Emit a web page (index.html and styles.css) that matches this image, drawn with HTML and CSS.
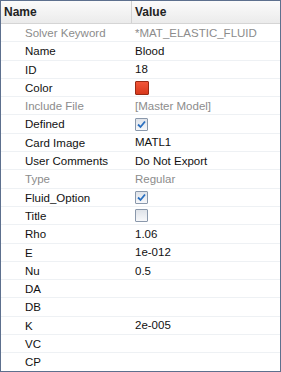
FILE: index.html
```html
<!DOCTYPE html>
<html lang="en">
<head>
    <meta charset="UTF-8">
    <title>Properties</title>
    <link rel="stylesheet" href="styles.css">
</head>
<body>
    <div class="grid-box">
        <div class="head">
            <div class="hcell name-col">Name</div>
            <div class="hcell value-col">Value</div>
        </div>
        <div class="row dim"><div class="name-col">Solver Keyword</div><div class="value-col">*MAT_ELASTIC_FLUID</div></div>
        <div class="row"><div class="name-col">Name</div><div class="value-col">Blood</div></div>
        <div class="row"><div class="name-col">ID</div><div class="value-col">18</div></div>
        <div class="row"><div class="name-col">Color</div><div class="value-col"><span class="swatch"></span></div></div>
        <div class="row dim"><div class="name-col">Include File</div><div class="value-col">[Master Model]</div></div>
        <div class="row"><div class="name-col">Defined</div><div class="value-col"><span class="check on"><svg viewBox="0 0 9 9" width="9" height="9"><path d="M1 4.5 L3.5 7 L8 1.5" fill="none" stroke="#2a6fc0" stroke-width="1.8"/></svg></span></div></div>
        <div class="row"><div class="name-col">Card Image</div><div class="value-col">MATL1</div></div>
        <div class="row"><div class="name-col">User Comments</div><div class="value-col">Do Not Export</div></div>
        <div class="row dim"><div class="name-col">Type</div><div class="value-col">Regular</div></div>
        <div class="row"><div class="name-col">Fluid_Option</div><div class="value-col"><span class="check on"><svg viewBox="0 0 9 9" width="9" height="9"><path d="M1 4.5 L3.5 7 L8 1.5" fill="none" stroke="#2a6fc0" stroke-width="1.8"/></svg></span></div></div>
        <div class="row"><div class="name-col">Title</div><div class="value-col"><span class="check"></span></div></div>
        <div class="row"><div class="name-col">Rho</div><div class="value-col">1.06</div></div>
        <div class="row"><div class="name-col">E</div><div class="value-col">1e-012</div></div>
        <div class="row"><div class="name-col">Nu</div><div class="value-col">0.5</div></div>
        <div class="row"><div class="name-col">DA</div><div class="value-col"></div></div>
        <div class="row"><div class="name-col">DB</div><div class="value-col"></div></div>
        <div class="row"><div class="name-col">K</div><div class="value-col">2e-005</div></div>
        <div class="row"><div class="name-col">VC</div><div class="value-col"></div></div>
        <div class="row last"><div class="name-col">CP</div><div class="value-col"></div></div>
    </div>
</body>
</html>
```

FILE: styles.css
```css
body {
    margin: 0;
    background: #ffffff;
    font-family: "Liberation Sans", Arial, sans-serif;
    font-size: 11.5px;
    color: #111111;
}

.grid-box {
    width: 279px;
    height: 370px;
    border: 1px solid #5d708e;
    background: #ffffff;
    overflow: hidden;
}

.head {
    display: flex;
    height: 22px;
    background: linear-gradient(#fbfbfb, #ebebeb);
    border-bottom: 1px solid #d5d5d5;
}

.hcell {
    font-weight: bold;
    font-size: 12px;
    line-height: 22px;
    color: #222222;
}

.head .name-col {
    width: 127px;
    padding-left: 3px;
    border-right: 1px solid #d2d2d2;
}

.head .value-col {
    padding-left: 3px;
}

.row {
    display: flex;
    height: 18.3px;
    line-height: 18px;
    border-bottom: 1px solid #eef1f4;
    box-sizing: border-box;
}

.row.last {
    border-bottom: none;
}

.row .name-col {
    width: 107px;
    padding-left: 24px;
    white-space: nowrap;
}

.row .value-col {
    padding-left: 3px;
    display: flex;
    align-items: center;
    white-space: nowrap;
}

.dim {
    color: #8c8c8c;
}

.swatch {
    width: 12px;
    height: 12px;
    border: 1px solid #9a2a14;
    border-radius: 1px;
    background: linear-gradient(#f2573a, #d8381c);
}

.check {
    width: 11px;
    height: 11px;
    border: 1px solid #8a98ab;
    border-radius: 1px;
    background: linear-gradient(#dfe3e9, #f7f8fa);
    display: flex;
    align-items: center;
    justify-content: center;
}
```
